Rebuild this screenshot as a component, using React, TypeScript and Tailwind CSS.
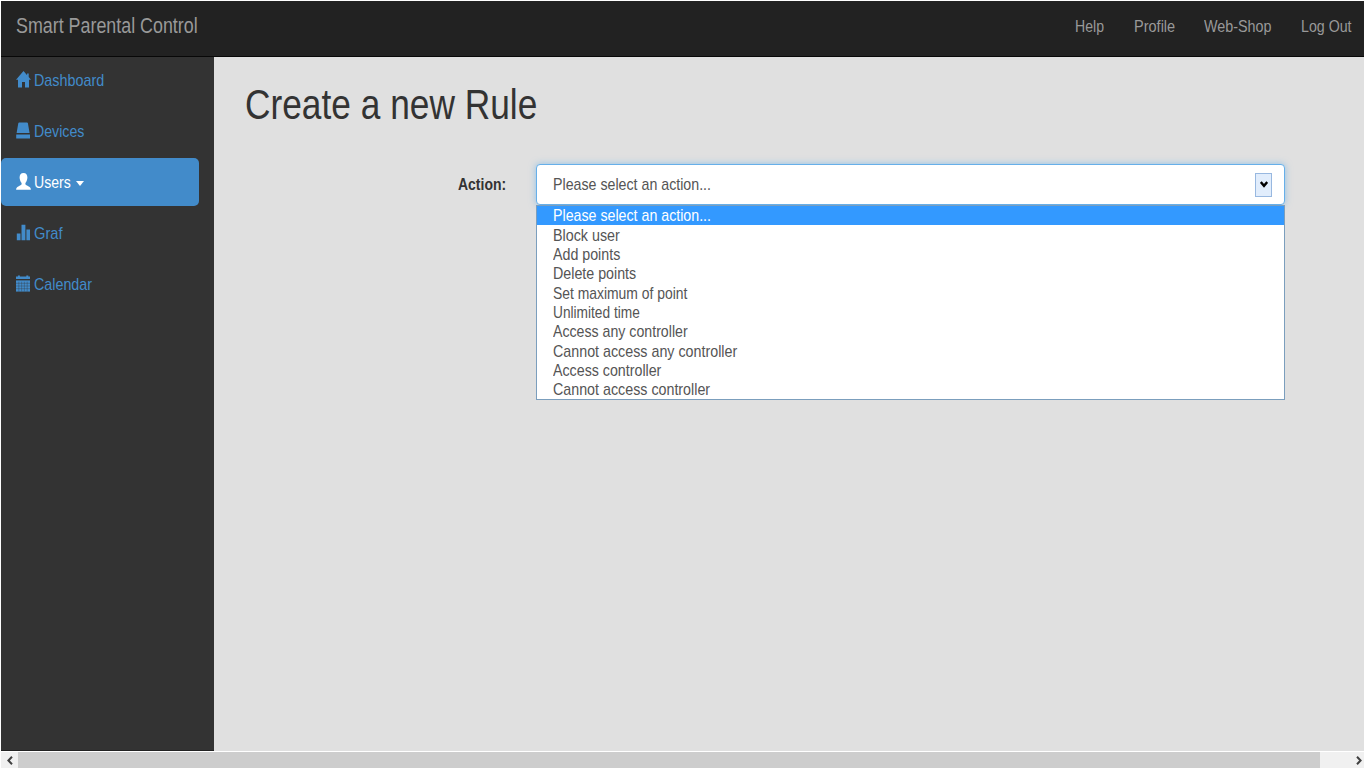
import { useLayoutEffect, useRef, useState } from "react";
import type { ReactNode } from "react";

function Fit({ width, children }: { width: number; children: string }) {
  const ref = useRef<HTMLSpanElement>(null);
  const [scale, setScale] = useState(1);
  useLayoutEffect(() => {
    if (ref.current) setScale(width / ref.current.offsetWidth);
  }, [width]);
  return (
    <span className="block shrink-0" style={{ width }}>
      <span
        ref={ref}
        className="inline-block origin-left whitespace-nowrap align-top"
        style={{ transform: `scaleX(${scale})` }}
      >
        {children}
      </span>
    </span>
  );
}

function Glyph({ children }: { children: ReactNode }) {
  return (
    <svg className="mr-[3px] block h-[17px] w-[15px] shrink-0" viewBox="0 0 15 17" fill="currentColor">
      {children}
    </svg>
  );
}

const icons = {
  home: (
    <Glyph>
      <path d="M7.5 0 0 8.8h2v7.8h4V11h3v5.6h4V8.8h2l-2.3-2.7V2.4h-1.6v1.8z" />
    </Glyph>
  ),
  device: (
    <Glyph>
      <path d="M3.2 0.5h7.8c.5 0 .8.3.9.8L13.6 11H.6L2.3 1.3c.1-.5.4-.8.9-.8zM.2 12.4h13.8v4H.2z" />
    </Glyph>
  ),
  user: (
    <Glyph>
      <path d="M7.5 0C10.2 0 11.4 1.8 11.4 4.6c0 2.2-.9 4.3-2 5.4v1.3c.2.8 1.6 1.3 3.3 2.1 1.4.6 2.1 1.3 2.2 3.3H.1c.1-2 .8-2.7 2.2-3.3 1.7-.8 3.1-1.3 3.3-2.1V10c-1.1-1.1-2-3.2-2-5.4C3.6 1.8 4.8 0 7.5 0z" />
    </Glyph>
  ),
  graph: (
    <Glyph>
      <path d="M.8 9.4h3.7v6.8H.8zM5.5 0.8h3.9v15.4H5.5zM10.4 5.4H14v10.8h-3.6z" />
    </Glyph>
  ),
  calendar: (
    <Glyph>
      <path d="M0 1.6h1.9V.6h2v1h6.4v-1h2v1H14v2.3H0z" />
      <path d="M0 5.4h14v11.2H0z" />
      <path
        d="M0 8.3h14M0 11h14M0 13.7h14M2.8 6.7v9.8M5.6 6.7v9.8M8.4 6.7v9.8M11.2 6.7v9.8"
        stroke="#333333"
        strokeWidth=".35"
      />
    </Glyph>
  ),
};

const menu = [
  { label: "Dashboard", width: 70, icon: icons.home },
  { label: "Devices", width: 50, icon: icons.device },
  { label: "Users", width: 36.5, icon: icons.user, active: true },
  { label: "Graf", width: 28.5, icon: icons.graph },
  { label: "Calendar", width: 58, icon: icons.calendar },
];

const links = [
  { label: "Help", width: 29 },
  { label: "Profile", width: 41 },
  { label: "Web-Shop", width: 67.5 },
  { label: "Log Out", width: 51 },
];

const options = [
  { label: "Please select an action...", width: 158 },
  { label: "Block user", width: 66.5 },
  { label: "Add points", width: 67 },
  { label: "Delete points", width: 83 },
  { label: "Set maximum of point", width: 134 },
  { label: "Unlimited time", width: 87 },
  { label: "Access any controller", width: 135 },
  { label: "Cannot access any controller", width: 184 },
  { label: "Access controller", width: 108 },
  { label: "Cannot access controller", width: 157 },
];

export default function App() {
  return (
    <div className="flex h-[769px] w-[1365px] flex-col overflow-hidden bg-white p-px font-['Liberation_Sans',Arial,sans-serif] text-[17px] leading-[19px]">
      <header className="flex h-[56px] shrink-0 items-start justify-between border-b border-[#080808] bg-[#222222] pr-[12px] pl-[15px] text-[#999999]">
        <div className="pt-[12px] text-[21.4px] leading-[26px]">
          <Fit width={182}>Smart Parental Control</Fit>
        </div>
        <nav className="flex gap-[29.5px] pt-[16px]">
          {links.map((l) => (
            <a key={l.label}>
              <Fit width={l.width}>{l.label}</Fit>
            </a>
          ))}
        </nav>
      </header>

      <div className="flex min-h-0 flex-1">
        <aside className="flex w-[213px] shrink-0 flex-col gap-[2px] border-b border-[#222] bg-[#333333] pr-[15px] text-[#428bca]">
          {menu.map((m) => (
            <a
              key={m.label}
              className={
                m.active
                  ? "flex h-[48.8px] shrink-0 items-center rounded-[5px] bg-[#428bca] pt-px pl-[15px] text-white"
                  : "flex h-[48.8px] shrink-0 items-center pt-px pl-[15px] first:-mt-px"
              }
            >
              <span className="-mt-[2px]">{m.icon}</span>
              <Fit width={m.width}>{m.label}</Fit>
              {m.active && (
                <svg className="mt-[3px] ml-[5.5px] h-[5px] w-[8px]" viewBox="0 0 8 5" fill="currentColor">
                  <path d="M0 0h8L4 5z" />
                </svg>
              )}
            </a>
          ))}
        </aside>

        <main className="flex-1 bg-[#e0e0e0] pl-[31px]">
          <h1 className="pt-[22px] text-[42.6px] leading-[50px] text-[#333333]">
            <Fit width={292.5}>Create a new Rule</Fit>
          </h1>
          <div className="mt-[35px] flex items-start pl-[213px]">
            <label className="mt-[11px] w-[78px] font-bold text-[#333333]">
              <Fit width={48.5}>Action:</Fit>
            </label>
            <div className="w-[749px] text-[#555555]">
              <div className="flex h-[41px] items-center justify-between rounded-[4px] border border-[#66afe9] bg-white pr-[12px] pl-[16px] shadow-[0_0_7px_rgba(102,175,233,0.65)]">
                <Fit width={158}>Please select an action...</Fit>
                <span className="flex h-[24px] w-[17px] items-center justify-center border border-[#98b8e0] bg-[#e1edfc]">
                  <svg className="h-[7px] w-[8px]" viewBox="0 0 8 7" fill="none" stroke="#000" strokeWidth="2.4">
                    <path d="M.8 1 4 4.8 7.2 1" />
                  </svg>
                </span>
              </div>
              <ul className="border border-[#7b9ebd] bg-white">
                {options.map((o, i) => (
                  <li
                    key={o.label}
                    className={
                      i === 0
                        ? "flex h-[19.35px] items-center bg-[#3399ff] pl-[16px] text-white"
                        : "flex h-[19.35px] items-center pl-[16px]"
                    }
                  >
                    <Fit width={o.width}>{o.label}</Fit>
                  </li>
                ))}
              </ul>
            </div>
          </div>
        </main>
      </div>

      <div className="mt-px flex h-[16px] shrink-0 items-center bg-[#f0f0f0]">
        <span className="flex w-[17px] justify-center">
          <svg className="h-[9px] w-[6px]" viewBox="0 0 6 9" fill="none" stroke="#404040" strokeWidth="2">
            <path d="M5 .7 1.4 4.5 5 8.3" />
          </svg>
        </span>
        <span className="h-[16px] w-[1302px] bg-[#cdcdcd]" />
        <span className="flex flex-1 justify-end pr-[2px]">
          <svg className="h-[9px] w-[6px]" viewBox="0 0 6 9" fill="none" stroke="#404040" strokeWidth="2">
            <path d="M1 .7 4.6 4.5 1 8.3" />
          </svg>
        </span>
      </div>
    </div>
  );
}
